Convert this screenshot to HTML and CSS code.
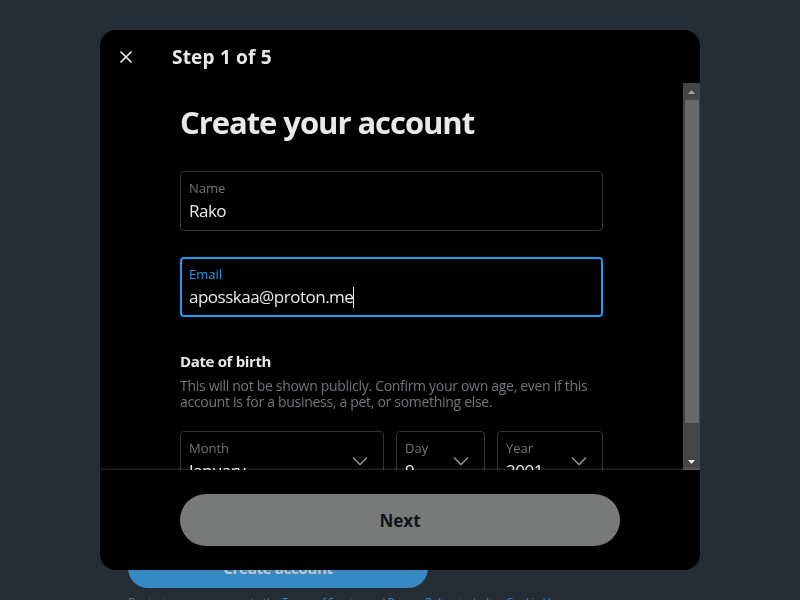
FILE: index.html
```html
<!DOCTYPE html>
<html lang="en">
<head>
<meta charset="utf-8">
<title>Create your account</title>
<link rel="stylesheet" href="styles.css">
</head>
<body>
<div class="page">
  <button class="signup">Create account</button>
  <p class="legal">By signing up, you agree to the <span class="link">Terms of Service</span> and <span class="link">Privacy Policy</span>, including <span class="link">Cookie Use</span>.</p>
</div>

<div class="backdrop">
  <div class="modal">
    <div class="header">
      <div class="close">
        <svg width="14" height="14" viewBox="0 0 14 14"><path d="M1.5 1.5 L12.5 12.5 M12.5 1.5 L1.5 12.5" stroke="#e7e9ea" stroke-width="1.7" fill="none"/></svg>
      </div>
      <div class="title">Step 1 of 5</div>
    </div>

    <div class="main">
      <div class="content">
        <h1 class="heading">Create your account</h1>

        <div class="field name-field">
          <div class="field-label">Name</div>
          <div class="field-value">Rako</div>
        </div>

        <div class="field focused">
          <div class="field-label">Email</div>
          <div class="field-value">aposskaa@proton.me<span class="caret"></span></div>
        </div>

        <div class="dob-title">Date of birth</div>
        <p class="dob-desc">This will not be shown publicly. Confirm your own age, even if this account is for a business, a pet, or something else.</p>

        <div class="selects">
          <div class="select">
            <div class="select-text">
              <div class="field-label">Month</div>
              <div class="field-value">January</div>
            </div>
            <svg class="chev" width="16" height="10" viewBox="0 0 16 10"><path d="M1 1.5 L8 8.5 L15 1.5" stroke="#8b8e91" stroke-width="1.6" fill="none"/></svg>
          </div>
          <div class="select">
            <div class="select-text">
              <div class="field-label">Day</div>
              <div class="field-value">9</div>
            </div>
            <svg class="chev" width="16" height="10" viewBox="0 0 16 10"><path d="M1 1.5 L8 8.5 L15 1.5" stroke="#8b8e91" stroke-width="1.6" fill="none"/></svg>
          </div>
          <div class="select">
            <div class="select-text">
              <div class="field-label">Year</div>
              <div class="field-value">2001</div>
            </div>
            <svg class="chev" width="16" height="10" viewBox="0 0 16 10"><path d="M1 1.5 L8 8.5 L15 1.5" stroke="#8b8e91" stroke-width="1.6" fill="none"/></svg>
          </div>
        </div>
      </div>

      <div class="scrollbar">
        <div class="sb-btn">
          <svg width="7" height="4" viewBox="0 0 7 4"><path d="M3.5 0 L7 4 L0 4 Z" fill="#a3a3a3"/></svg>
        </div>
        <div class="sb-track"><div class="sb-thumb"></div></div>
        <div class="sb-btn">
          <svg width="7" height="4" viewBox="0 0 7 4"><path d="M0 0 L7 0 L3.5 4 Z" fill="#f0f0f0"/></svg>
        </div>
      </div>
    </div>

    <div class="footer">
      <button class="next">Next</button>
    </div>
  </div>
</div>
</body>
</html>
```

FILE: styles.css
```css
html, body {
  margin: 0;
  padding: 0;
}

body {
  background: #000;
  font-family: "Open Sans", "Noto Sans", "Liberation Sans", sans-serif;
  color: #e7e9ea;
  width: 800px;
  height: 600px;
  overflow: hidden;
}

.page {
  box-sizing: border-box;
  height: 600px;
  padding: 548px 0 0 128px;
}

.signup {
  display: block;
  width: 300px;
  height: 40px;
  border: 0;
  border-radius: 20px;
  background: #1d9bf0;
  color: #fff;
  font-family: inherit;
  font-size: 15px;
  font-weight: 700;
  letter-spacing: -0.3px;
}

.legal {
  margin: 7px 0 0;
  font-size: 11px;
  line-height: 14px;
  color: #71767b;
  white-space: nowrap;
  letter-spacing: -0.2px;
}

.link {
  color: #1d9bf0;
}

.backdrop {
  position: fixed;
  inset: 0;
  background: rgba(91, 112, 131, 0.4);
  display: flex;
  align-items: center;
  justify-content: center;
}

.modal {
  width: 600px;
  height: 540px;
  background: #000;
  border-radius: 16px;
  overflow: hidden;
  display: flex;
  flex-direction: column;
}

.header {
  flex: none;
  height: 53px;
  display: flex;
  align-items: center;
  padding: 0 8px;
}

.close {
  width: 36px;
  height: 36px;
  display: flex;
  align-items: center;
  justify-content: center;
}

.title {
  margin-left: 28px;
  font-size: 19px;
  font-weight: 700;
  color: #e7e9ea;
  letter-spacing: 0.2px;
}

.main {
  flex: 1;
  min-height: 0;
  display: flex;
}

.content {
  flex: 1;
  overflow: hidden;
  padding: 0 80px;
}

.heading {
  margin: 21px 0 0;
  font-size: 31px;
  line-height: 36px;
  font-weight: 700;
  color: #e7e9ea;
  letter-spacing: -1.05px;
}

.field {
  box-sizing: border-box;
  height: 60px;
  border: 1px solid #333639;
  border-radius: 4px;
  padding: 8px 8px 0;
}

.name-field {
  margin-top: 31px;
}

.field.focused {
  margin-top: 26px;
  border: 2px solid #1d9bf0;
  padding: 7px 7px 0;
}

.field-label {
  font-size: 13px;
  line-height: 16px;
  color: #71767b;
}

.focused .field-label {
  color: #1d9bf0;
}

.field-value {
  margin-top: 3px;
  font-size: 17px;
  line-height: 24px;
  color: #e7e9ea;
  white-space: nowrap;
  letter-spacing: -0.5px;
}

.caret {
  display: inline-block;
  width: 1px;
  height: 21px;
  background: #e7e9ea;
  vertical-align: -5px;
}

.dob-title {
  margin-top: 34px;
  font-size: 15px;
  line-height: 20px;
  font-weight: 700;
  color: #e7e9ea;
  letter-spacing: -0.35px;
}

.dob-desc {
  margin: 7px 0 0;
  font-size: 14px;
  line-height: 16px;
  color: #71767b;
  letter-spacing: -0.3px;
}

.selects {
  margin-top: 21px;
  display: grid;
  grid-template-columns: 204px 89px 106px;
  gap: 12px;
}

.select {
  box-sizing: border-box;
  height: 60px;
  border: 1px solid #333639;
  border-radius: 4px;
  display: flex;
  align-items: center;
  padding: 0 15px 0 8px;
}

.select-text {
  flex: 1;
  align-self: flex-start;
  padding-top: 8px;
}

.chev {
  flex: none;
}

.scrollbar {
  flex: none;
  width: 17px;
  background: #454545;
  display: flex;
  flex-direction: column;
}

.sb-btn {
  flex: none;
  height: 17px;
  display: flex;
  align-items: center;
  justify-content: center;
}

.sb-track {
  flex: 1;
  padding: 0 1px 0 2px;
}

.sb-thumb {
  height: 323px;
  background: #686868;
}

.footer {
  flex: none;
  height: 100px;
  box-sizing: border-box;
  padding: 24px 80px;
  box-shadow: 0 -1px 3px rgba(255, 255, 255, 0.18);
}

.next {
  display: block;
  width: 100%;
  height: 52px;
  border: 0;
  border-radius: 26px;
  background: #787a7a;
  color: #0f1419;
  font-family: inherit;
  font-size: 17px;
  font-weight: 700;
}
```
